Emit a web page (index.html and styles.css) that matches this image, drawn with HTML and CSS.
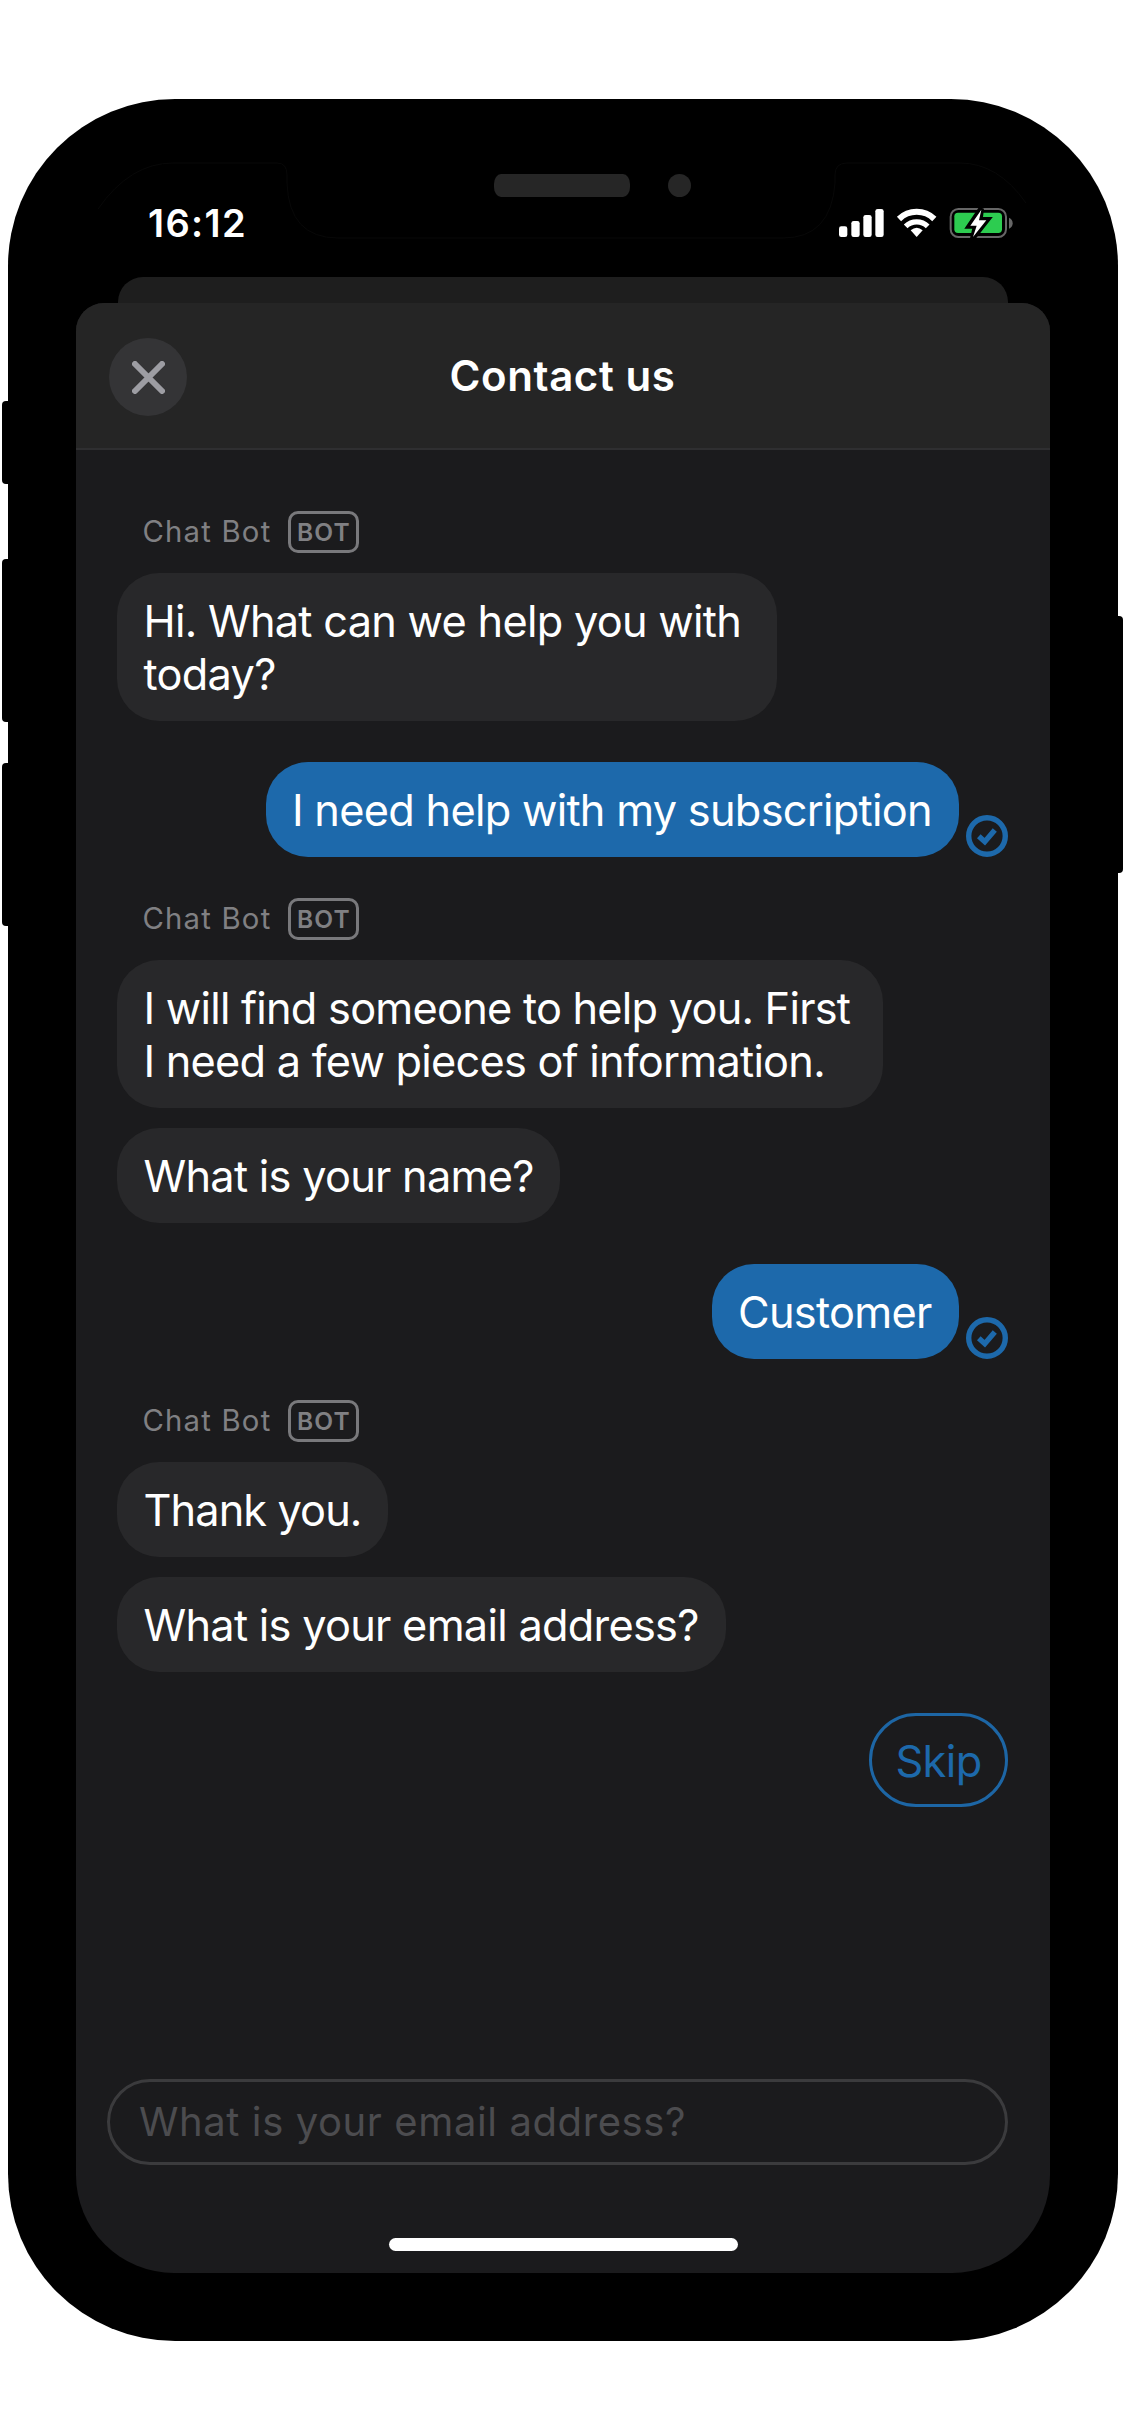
FILE: index.html
```
<!DOCTYPE html>
<html lang="en">
<head>
<meta charset="utf-8">
<title>Contact us</title>
<link rel="stylesheet" href="styles.css">
</head>
<body>
<div class="phone">
  <span class="side-button mute"></span>
  <span class="side-button volume-up"></span>
  <span class="side-button volume-down"></span>
  <span class="side-button power"></span>
  <svg class="bezel" viewBox="0 0 1110 2242" fill="none" stroke="#080808" stroke-width="1">
    <path d="M90 110Q122 64 165 64H269Q279 64 279 76V84Q281 139 330 139H775Q823 139 827 84V76Q827 64 839 64H952Q990 64 1018 104"/>
  </svg>
  <span class="speaker"></span>
  <span class="camera"></span>

  <main class="screen">
    <div class="status-bar">
      <span class="time">16:12</span>
      <svg class="status-icons" viewBox="26 36 522 96" width="174" height="32">
        <g fill="#fff">
          <rect x="26" y="94" width="25" height="32" rx="7"/>
          <rect x="63" y="78" width="25" height="48" rx="7"/>
          <rect x="99" y="60" width="25" height="66" rx="7"/>
          <rect x="135" y="42" width="25" height="84" rx="7"/>
          <path d="M259 126L241 106Q259 90 277 106Z"/>
        </g>
        <g fill="none" stroke="#fff">
          <path d="M206 72A76 76 0 0 1 312 72" stroke-width="18"/>
          <path d="M226 94A47 47 0 0 1 292 94" stroke-width="16"/>
        </g>
        <rect x="361" y="42" width="166" height="84" rx="23" fill="none" stroke="#666" stroke-width="6"/>
        <path d="M536 68Q547 73 547 84.500Q547 96 536 101Z" fill="#666"/>
        <rect x="372" y="53" width="143" height="61" rx="11" fill="#2dcc50"/>
        <path d="M453 40L417 93H436L427 130L471 74H449Z" fill="#fff" stroke="#000" stroke-width="16"/>
        <path d="M453 44L420 92H439L428 126L468 76H446Z" fill="#fff"/>
      </svg>
    </div>
    <div class="back-sheet"></div>
    <section class="sheet">
      <header class="header">
        <button class="close" aria-label="Close">
          <svg viewBox="0 0 33 33" width="33" height="33"><path d="M3 3L30 30M30 3L3 30" stroke="#9d9da3" stroke-width="6" stroke-linecap="round"/></svg>
        </button>
        <h1>Contact us</h1>
      </header>

      <div class="chat">
        <div class="group">
          <div class="sender">Chat Bot <span class="tag">BOT</span></div>
          <p class="bubble greeting">Hi. What can we help you with<br>today?</p>
        </div>
        <div class="reply">
          <p class="bubble sent topic">I need help with my subscription</p>
          <svg class="delivered" viewBox="0 0 42 42"><circle cx="21" cy="21" r="18.300"/><path d="M12.800 21.300L18.800 26.700L28.800 15"/></svg>
        </div>
        <div class="group">
          <div class="sender">Chat Bot <span class="tag">BOT</span></div>
          <p class="bubble info">I will find someone to help you. First<br>I need a few pieces of information.</p>
          <p class="bubble name">What is your name?</p>
        </div>
        <div class="reply">
          <p class="bubble sent customer">Customer</p>
          <svg class="delivered" viewBox="0 0 42 42"><circle cx="21" cy="21" r="18.300"/><path d="M12.800 21.300L18.800 26.700L28.800 15"/></svg>
        </div>
        <div class="group">
          <div class="sender">Chat Bot <span class="tag">BOT</span></div>
          <p class="bubble thanks">Thank you.</p>
          <p class="bubble email">What is your email address?</p>
        </div>
        <button class="skip">Skip</button>
      </div>

      <footer class="composer">
        <div class="field">What is your email address?</div>
        <div class="home-indicator"></div>
      </footer>
    </section>
  </main>
</div>
</body>
</html>
```
FILE: styles.css
```
* { box-sizing: border-box; }

body {
  margin: 0;
  padding: 99px 0 0 7.5px;
  height: 2436px;
  background: #fff;
  font-family: Inter, "Liberation Sans", sans-serif;
}

p, h1 { margin: 0; }

button { font: inherit; border: 0; padding: 0; }

/* Device */
.phone {
  position: relative;
  width: 1110px;
  height: 2242px;
  padding: 64px 68px 68px;
  background: #000;
  border-radius: 167px;
}

.side-button {
  position: absolute;
  left: -5.5px;
  width: 20px;
  background: #000;
  border-radius: 4px;
}
.mute { top: 302px; height: 83px; }
.volume-up { top: 460px; height: 163px; }
.volume-down { top: 664px; height: 163px; }
.power { left: auto; right: -5.5px; top: 517px; height: 257px; }

.bezel {
  position: absolute;
  top: 0;
  left: 0;
  width: 1110px;
  height: 2242px;
}

.speaker, .camera {
  position: absolute;
  top: 75px;
  height: 23px;
  background: #262626;
}
.speaker { left: 486.5px; width: 136px; border-radius: 7px / 10px; }
.camera { left: 660.5px; width: 23px; border-radius: 50%; }

.screen {
  display: flex;
  flex-direction: column;
  width: 974px;
  height: 2110px;
  border-radius: 0 0 98px 98px;
  overflow: hidden;
}

/* Status bar */
.status-bar {
  display: flex;
  justify-content: space-between;
  align-items: flex-start;
  flex: none;
  height: 114px;
  padding: 36.5px 37px 0 72.5px;
}
.time {
  color: #fff;
  font-size: 38px;
  font-weight: 600;
  line-height: 46px;
  letter-spacing: 1.35px;
}
.status-icons { margin-top: 7.5px; }

/* Sheets */
.back-sheet {
  flex: none;
  height: 26px;
  margin: 0 42px;
  background: #1e1e1e;
  border-radius: 25px 25px 0 0;
}
.sheet {
  display: flex;
  flex: 1;
  flex-direction: column;
  background: #1b1b1d;
  border-radius: 28px 28px 0 0;
  overflow: hidden;
}

.header {
  display: grid;
  grid-template-columns: 78px 1fr 78px;
  align-items: center;
  flex: none;
  height: 147px;
  padding: 3px 33.5px 0;
  background: #252525;
  border-bottom: 2px solid #2f2f31;
}
.close {
  display: grid;
  place-items: center;
  width: 78px;
  height: 78px;
  background: #343436;
  border-radius: 50%;
}
.header h1 {
  margin-top: -3px;
  color: #fff;
  font-size: 42px;
  font-weight: 600;
  line-height: 52px;
  letter-spacing: .6px;
  text-align: center;
}

/* Conversation */
.chat {
  display: flex;
  flex: 1;
  flex-direction: column;
  gap: 41.3px;
  padding: 61px 41.5px 0;
}
.group {
  display: flex;
  flex-direction: column;
  align-items: flex-start;
  gap: 20.3px;
}
.sender {
  display: flex;
  align-items: center;
  gap: 17px;
  height: 41.7px;
  padding: 1px 0 0 25.5px;
  color: #808083;
  font-size: 29.3px;
  line-height: 42px;
  letter-spacing: 1.2px;
}
.tag {
  display: flex;
  align-items: center;
  justify-content: center;
  width: 71px;
  height: 41.7px;
  margin-top: -1px;
  border: 3px solid #79797c;
  border-radius: 10px;
  font-size: 24.5px;
  font-weight: 600;
  letter-spacing: 1.1px;
}
.bubble {
  padding: 21.7px 0 20px 26.5px;
  background: #28282a;
  border-radius: 42px;
  color: #fff;
  font-size: 43.3px;
  line-height: 53px;
  letter-spacing: -.72px;
  white-space: nowrap;
}
.greeting { width: 660px; }
.info { width: 766px; letter-spacing: -.76px; }
.name { width: 443px; }
.thanks { width: 271px; letter-spacing: -.9px; }
.email { width: 608.5px; }

.reply {
  display: flex;
  align-items: flex-end;
  justify-content: flex-end;
  gap: 7.5px;
}
.sent { background: #1d69ab; }
.topic { width: 693px; }
.customer { width: 247px; }
.delivered {
  width: 42px;
  height: 42px;
  fill: none;
  stroke: #1d69ab;
  stroke-width: 5.4;
}

.skip {
  align-self: flex-end;
  width: 139px;
  height: 94.5px;
  padding-top: 1px;
  background: none;
  border: 3px solid #1d66a5;
  border-radius: 47px;
  color: #1d69ab;
  font-size: 43.3px;
  letter-spacing: -.6px;
}

/* Composer */
.composer {
  display: flex;
  flex: none;
  flex-direction: column;
  padding: 0 41.5px 22px 31.5px;
}
.field {
  height: 86px;
  padding-left: 29px;
  border: 3px solid #3b3b3d;
  border-radius: 43px;
  color: #4c4c4f;
  font-size: 40px;
  line-height: 80px;
  letter-spacing: .6px;
}
.home-indicator {
  width: 349px;
  height: 13px;
  margin: 73px 0 0 281.5px;
  background: #fff;
  border-radius: 7px;
}
```
